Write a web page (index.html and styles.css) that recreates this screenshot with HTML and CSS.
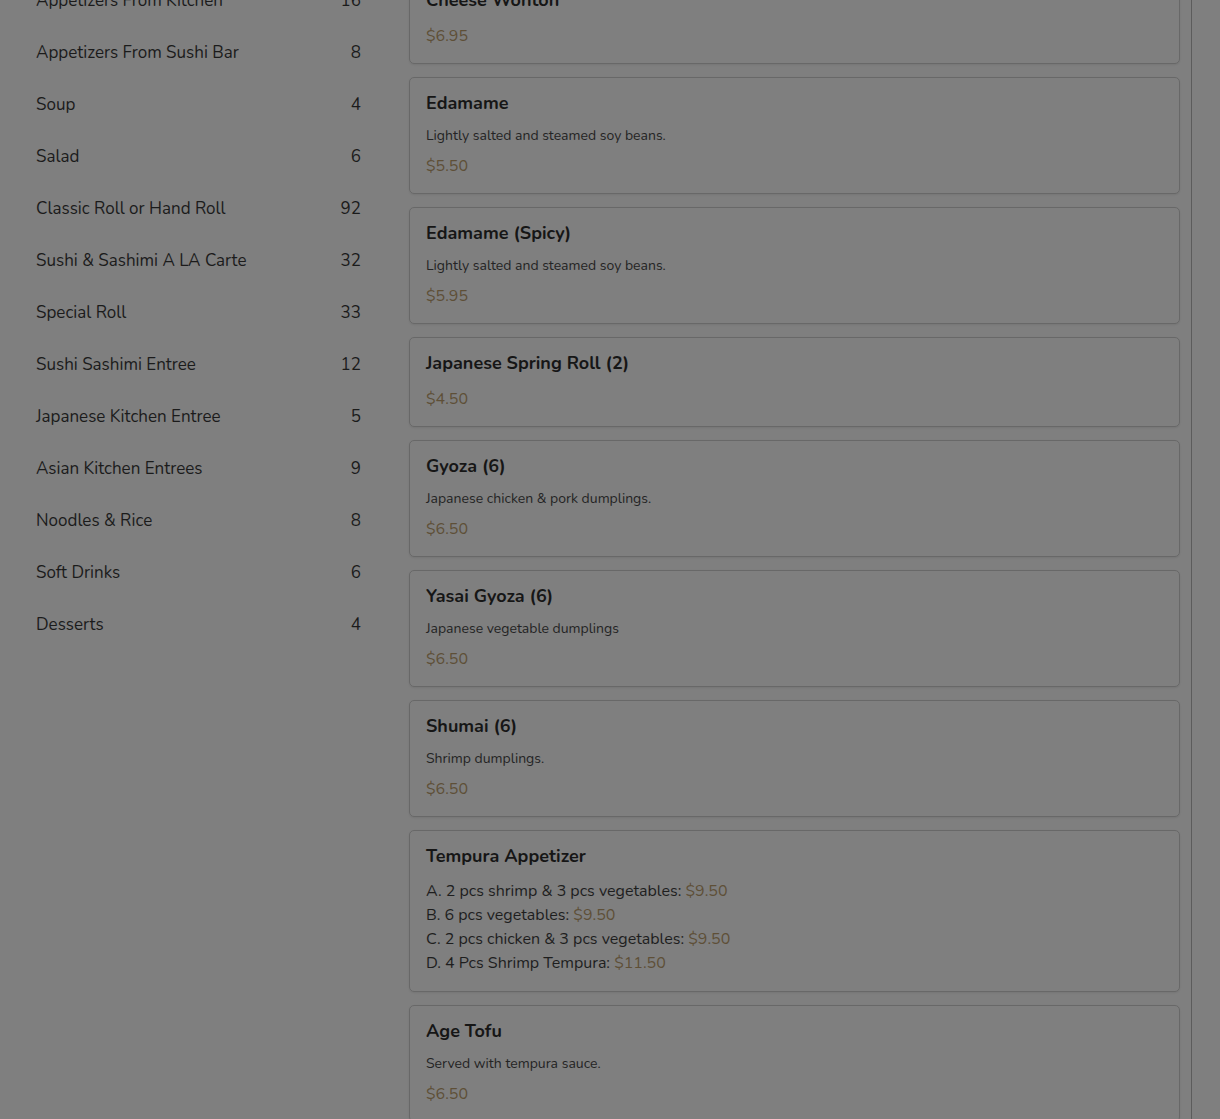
FILE: index.html
```html
<!DOCTYPE html>
<html lang="en">
<head>
<meta charset="utf-8">
<title>Menu</title>
<link rel="stylesheet" href="styles.css">
</head>
<body>
<div class="page">
  <nav class="sidebar">
    <div class="cat"><span>Appetizers From Kitchen</span><span>16</span></div>
    <div class="cat"><span>Appetizers From Sushi Bar</span><span>8</span></div>
    <div class="cat"><span>Soup</span><span>4</span></div>
    <div class="cat"><span>Salad</span><span>6</span></div>
    <div class="cat"><span>Classic Roll or Hand Roll</span><span>92</span></div>
    <div class="cat"><span>Sushi &amp; Sashimi A LA Carte</span><span>32</span></div>
    <div class="cat"><span>Special Roll</span><span>33</span></div>
    <div class="cat"><span>Sushi Sashimi Entree</span><span>12</span></div>
    <div class="cat"><span>Japanese Kitchen Entree</span><span>5</span></div>
    <div class="cat"><span>Asian Kitchen Entrees</span><span>9</span></div>
    <div class="cat"><span>Noodles &amp; Rice</span><span>8</span></div>
    <div class="cat"><span>Soft Drinks</span><span>6</span></div>
    <div class="cat"><span>Desserts</span><span>4</span></div>
  </nav>
  <main class="items">
    <div class="card">
      <div class="title">Cheese Wonton</div>
      <div class="price">$6.95</div>
    </div>
    <div class="card">
      <div class="title">Edamame</div>
      <div class="desc">Lightly salted and steamed soy beans.</div>
      <div class="price">$5.50</div>
    </div>
    <div class="card">
      <div class="title">Edamame (Spicy)</div>
      <div class="desc">Lightly salted and steamed soy beans.</div>
      <div class="price">$5.95</div>
    </div>
    <div class="card">
      <div class="title">Japanese Spring Roll (2)</div>
      <div class="price">$4.50</div>
    </div>
    <div class="card">
      <div class="title">Gyoza (6)</div>
      <div class="desc">Japanese chicken &amp; pork dumplings.</div>
      <div class="price">$6.50</div>
    </div>
    <div class="card">
      <div class="title">Yasai Gyoza (6)</div>
      <div class="desc">Japanese vegetable dumplings</div>
      <div class="price">$6.50</div>
    </div>
    <div class="card">
      <div class="title">Shumai (6)</div>
      <div class="desc">Shrimp dumplings.</div>
      <div class="price">$6.50</div>
    </div>
    <div class="card">
      <div class="title">Tempura Appetizer</div>
      <div class="options">
        <div>A. 2 pcs shrimp &amp; 3 pcs vegetables: <span class="amt">$9.50</span></div>
        <div>B. 6 pcs vegetables: <span class="amt">$9.50</span></div>
        <div>C. 2 pcs chicken &amp; 3 pcs vegetables: <span class="amt">$9.50</span></div>
        <div>D. 4 Pcs Shrimp Tempura: <span class="amt">$11.50</span></div>
      </div>
    </div>
    <div class="card">
      <div class="title">Age Tofu</div>
      <div class="desc">Served with tempura sauce.</div>
      <div class="price">$6.50</div>
    </div>
  </main>
  <div class="rail"></div>
</div>
</body>
</html>
```
FILE: styles.css
```css
html, body {
  margin: 0;
  padding: 0;
  background: #7f7f7f;
  overflow: hidden;
}
body {
  font-family: "Nunito", "Lato", "Open Sans", sans-serif;
  color: #1c1c1c;
}
.page {
  display: flex;
  align-items: stretch;
  margin-top: -26px;
  padding-left: 36px;
  min-height: 1200px;
}
.sidebar {
  width: 325px;
  flex: none;
}
.cat {
  height: 52px;
  display: flex;
  align-items: center;
  justify-content: space-between;
  font-size: 17px;
  color: #1b1b1b;
}
.items {
  width: 771px;
  flex: none;
  margin-left: 48px;
  display: flex;
  flex-direction: column;
  gap: 13px;
}
.card {
  border: 1px solid #686868;
  border-radius: 5px;
  padding: 13px 16px 16px;
  box-shadow: 0 1px 2px rgba(0,0,0,0.08);
}
.title {
  font-size: 18px;
  font-weight: 700;
  line-height: 24px;
  color: #161616;
  margin-bottom: 11px;
}
.title + .price {
  padding-top: 2px;
}
.desc {
  font-size: 14px;
  line-height: 20px;
  color: #242424;
  margin-bottom: 9px;
}
.price {
  font-size: 16px;
  line-height: 22px;
  color: #5e4f37;
}
.options {
  font-size: 16px;
  line-height: 24px;
  color: #1e1e1e;
}
.amt {
  color: #5e4f37;
}
.rail {
  flex: none;
  width: 0;
  margin-left: 11px;
  border-left: 1px solid #5c5c5c;
}
```
